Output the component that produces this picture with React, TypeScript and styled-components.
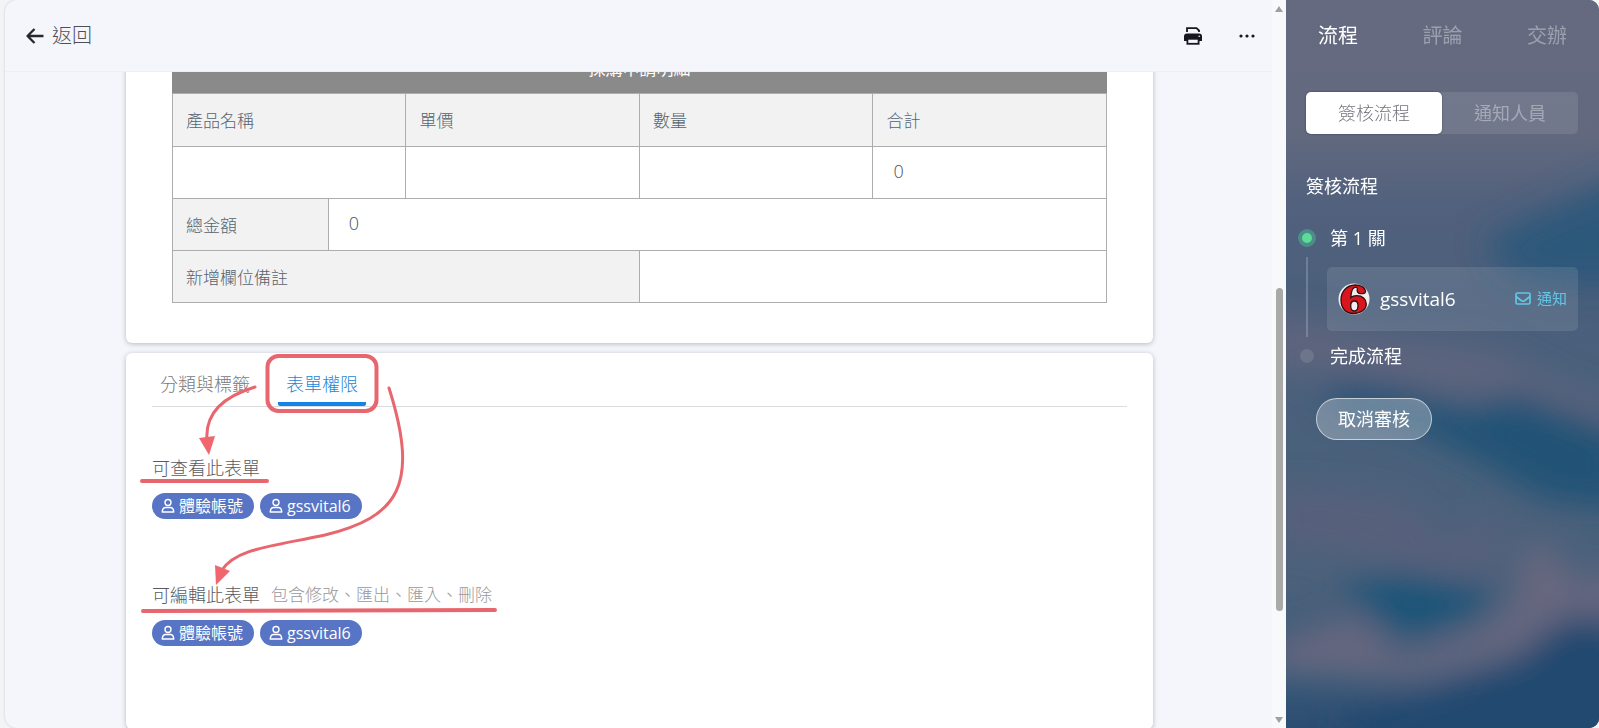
import React, { useLayoutEffect, useRef } from "react";
import styled, { createGlobalStyle, css } from "styled-components";

const GlobalStyle = createGlobalStyle`
  * { box-sizing: border-box; }
  body {
    margin: 0;
    background: #f1f2f3;
    color: #666b73;
    font-family: "Open Sans", "Noto Sans CJK TC", sans-serif;
    font-weight: 300;
    font-size: 18px;
    line-height: 24px;
  }
  button {
    margin: 0;
    padding: 0;
    border: 0;
    background: none;
    color: inherit;
    font: inherit;
    cursor: pointer;
  }
`;

const Shell = styled.div`
  display: grid;
  grid-template-columns: minmax(0, 1fr) 313px;
  height: 100vh;
  padding-left: 5px;
  background: #f3f4f6;
`;

const Main = styled.main`
  display: grid;
  grid-template-columns: minmax(0, 1fr) 14px;
  min-height: 0;
  background: #f5f6fb;
  border-radius: 12px 0 0 12px;
  box-shadow: 0 0 3px rgba(0, 0, 0, 0.16);
  overflow: hidden;
`;

const Document = styled.div`
  display: flex;
  flex-direction: column;
  min-width: 0;
  min-height: 0;
`;

const Header = styled.header`
  display: flex;
  align-items: center;
  justify-content: space-between;
  flex: none;
  height: 72px;
  padding: 0 8px 0 20px;
  border-bottom: 1px solid #eeeff4;
`;

const BackButton = styled.button`
  display: flex;
  align-items: center;
  gap: 7px;
  color: #4d5056;
  font-size: 20px;
`;

const HeaderActions = styled.div`
  display: flex;
  gap: 20px;
`;

const IconButton = styled.button`
  display: grid;
  place-items: center;
  width: 34px;
  height: 34px;
  color: #17181f;
`;

const ScrollPane = styled.div`
  flex: 1;
  min-height: 0;
  overflow-y: auto;
  scrollbar-width: none;
`;

const Page = styled.div`
  display: flex;
  flex-direction: column;
  gap: 10px;
  padding: 20px 119px 200px 121px;
`;

const Card = styled.section`
  background: #fff;
  border-radius: 6px;
  box-shadow: 0 1px 5px rgba(40, 45, 60, 0.3);
`;

const FormCard = styled(Card)`
  padding: 46px 46px 40px;
`;

const AccessCard = styled(Card)`
  position: relative;
  min-height: 376px;
  padding: 9px 26px;
`;

const FormTable = styled.table`
  width: 100%;
  table-layout: fixed;
  border-collapse: collapse;
  color: #566270;
  font-size: 17px;

  caption {
    height: 52px;
    padding: 16px 0 12px;
    background: #8a8a8a;
    color: #fff;
    font-weight: 400;
  }
  th, td {
    height: 52px;
    padding: 2px 13px 0;
    border: 1px solid #adadad;
    text-align: left;
    font-weight: 300;
  }
  th { background: #f2f2f2; }
  th[scope="col"] { height: 53px; }
  td { padding: 0 20px 4px; color: #4c5158; font-size: 18px; }
`;

const TabBar = styled.div`
  display: flex;
  gap: 20px;
  border-bottom: 1px solid #dcdde0;
`;

const Tab = styled.button<{ $active?: boolean }>`
  height: 44px;
  padding: 4px 8px 0;
  border-bottom: 4px solid ${(p) => (p.$active ? "#1583e4" : "transparent")};
  border-radius: 2px;
  color: ${(p) => (p.$active ? "#1f86d6" : "#77797d")};
`;

const AccessGroup = styled.div`
  display: flex;
  flex-direction: column;
  gap: 13px;
  padding-top: 49px;
  & + & { padding-top: 64px; }
`;

const AccessTitle = styled.h3`
  display: flex;
  gap: 11px;
  margin: 0;
  color: #595b60;
  font-size: 18px;
  font-weight: 300;
  small { color: #97999d; font-size: 17px; }
`;

const Chips = styled.div`
  display: flex;
  gap: 6px;
`;

const Chip = styled.span`
  display: flex;
  align-items: center;
  gap: 4px;
  height: 26px;
  padding: 0 11px 0 9px;
  border-radius: 13px;
  background: #5874c4;
  color: #fff;
  font-size: 16px;
  font-weight: 400;
`;

const Annotation = styled.svg`
  position: absolute;
  left: 14px;
  top: 1px;
  width: 380px;
  height: 270px;
  pointer-events: none;
`;

const ScrollRail = styled.div`
  display: grid;
  grid-template-rows: 17px minmax(0, 271fr) minmax(0, 323fr) minmax(0, 100fr) 17px;
  justify-items: center;
  align-items: center;
  background: #f8f9fb;
`;

const Thumb = styled.div`
  grid-row: 3;
  width: 7px;
  height: 100%;
  border-radius: 4px;
  background: #a9a9a9;
`;

const Arrow = styled.i<{ $down?: boolean }>`
  grid-row: ${(p) => (p.$down ? 5 : 1)};
  border: 4px solid transparent;
  ${(p) =>
    p.$down
      ? css`border-top: 6px solid #a0a0a0; border-bottom: 0;`
      : css`border-bottom: 6px solid #a0a0a0; border-top: 0;`}
`;

const Sidebar = styled.aside`
  position: relative;
  isolation: isolate;
  border-radius: 0 10px 10px 0;
  overflow: hidden;
  background: #4d617c;
  color: #fff;
  font-weight: 400;
`;

const Backdrop = styled.svg`
  position: absolute;
  inset: 0;
  z-index: -1;
  width: 100%;
  height: 100%;
`;

const SideTabs = styled.nav`
  display: flex;
  justify-content: space-between;
  align-items: center;
  height: 72px;
  padding: 0 32px;
`;

const SideTab = styled.button<{ $active?: boolean }>`
  color: ${(p) => (p.$active ? "#fff" : "rgba(255, 255, 255, 0.36)")};
  font-size: 20px;
`;

const SideBody = styled.div`
  padding: 20px 21px 0 20px;
`;

const Segmented = styled.div`
  display: flex;
  height: 42px;
  border-radius: 5px;
  background: rgba(255, 255, 255, 0.1);
`;

const Segment = styled.button<{ $active?: boolean }>`
  flex: 1;
  border-radius: 5px;
  ${(p) =>
    p.$active
      ? css`background: #fff; color: #73767c; font-weight: 300; box-shadow: 0 0 2px rgba(0, 0, 0, 0.4);`
      : css`color: rgba(255, 255, 255, 0.36);`}
`;

const SideTitle = styled.h2`
  margin: 40px 0 28px;
  font-size: 18px;
  font-weight: 400;
`;

const Step = styled.div`
  display: grid;
  grid-template-columns: 2px minmax(0, 1fr);
  column-gap: 19px;
`;

const StepName = styled.span`
  padding-left: 3px;
`;

const Marker = styled.span<{ $done?: boolean }>`
  justify-self: center;
  align-self: center;
  width: ${(p) => (p.$done ? 18 : 14)}px;
  height: ${(p) => (p.$done ? 18 : 14)}px;
  border-radius: 50%;
  ${(p) =>
    p.$done
      ? css`background: #5cdb99; border: 4px solid #4c8d88;`
      : css`background: rgba(255, 255, 255, 0.11);`}
`;

const Rail = styled.span`
  height: 80px;
  margin-top: 7px;
  background: rgba(255, 255, 255, 0.2);
`;

const Approver = styled.div`
  display: flex;
  align-items: center;
  gap: 10px;
  height: 64px;
  margin: 17px 0 13px;
  padding: 0 11px;
  border-radius: 5px;
  background: rgba(255, 255, 255, 0.1);
  font-size: 19px;
`;

const NotifyButton = styled.button`
  display: flex;
  align-items: center;
  gap: 6px;
  margin-left: auto;
  padding-bottom: 2px;
  color: #62c6e8;
  font-size: 15px;
`;

const CancelButton = styled.button`
  height: 42px;
  margin: 30px 10px;
  padding: 0 21px;
  border: 1px solid rgba(255, 255, 255, 0.6);
  border-radius: 21px;
  background: rgba(255, 255, 255, 0.27);
`;

const PersonIcon = () => (
  <svg width="14" height="16" viewBox="0 0 14 16" fill="none" stroke="#fff" strokeWidth="1.4" aria-hidden="true">
    <circle cx="7" cy="4.500" r="3" />
    <path d="M4.500 9.500h5c1.700 0 3 1.500 3.300 4.500H1.200C1.500 11 2.800 9.500 4.500 9.500Z" strokeLinejoin="round" />
  </svg>
);

const people = ["體驗帳號", "gssvital6"];

const PeopleChips = () => (
  <Chips>
    {people.map((name) => (
      <Chip key={name}>
        <PersonIcon />
        {name}
      </Chip>
    ))}
  </Chips>
);

const SidebarBackdrop = () => (
  <Backdrop viewBox="0 0 313 728" preserveAspectRatio="none" aria-hidden="true">
    <defs>
      <linearGradient id="base" x1="0" y1="0" x2="0" y2="1">
        <stop offset="0" stopColor="#666a80" />
        <stop offset="0.18" stopColor="#62697f" />
        <stop offset="0.28" stopColor="#52617d" />
        <stop offset="0.4" stopColor="#4b5f7b" />
        <stop offset="0.6" stopColor="#4a617c" />
        <stop offset="0.8" stopColor="#4c617b" />
        <stop offset="0.92" stopColor="#3b5b7a" />
        <stop offset="1" stopColor="#2c4d72" />
      </linearGradient>
      <filter id="haze" x="-50%" y="-50%" width="200%" height="200%">
        <feGaussianBlur stdDeviation="16" />
      </filter>
    </defs>
    <rect width="313" height="728" fill="url(#base)" />
    <g filter="url(#haze)">
      <path d="M350 170 L300 195 L240 220 L200 240 L220 272 L270 285 L350 285Z" fill="#2a567a" opacity="0.9" />
      <path d="M-20 310 L90 335 L200 348 L290 390 L340 410 L340 430 L250 400 L150 390 L-20 370Z" fill="#67667f" opacity="0.7" />
      <path d="M35 380 L100 384 L180 412 L230 392 L340 435 L340 510 L260 500 L190 460 L120 425 L50 410Z" fill="#205276" />
      <path d="M-10 485 L60 490 L120 500 L160 540 L200 515 L225 540 L190 580 L130 570 L70 555 L-10 545Z" fill="#635f7b" opacity="0.5" />
      <path d="M50 585 L120 575 L210 590 L190 618 L120 640 L85 615Z" fill="#1c5478" />
      <path d="M-20 650 L20 630 L75 615 L115 655 L190 630 L230 600 L238 545 L262 545 L290 585 L340 570 L340 620 L280 615 L230 655 L130 680 L-20 670Z" fill="#6c687f" opacity="0.9" />
      <path d="M340 622 L280 618 L230 660 L140 695 L60 715 L60 760 L340 760Z" fill="#22486f" />
    </g>
  </Backdrop>
);

export default function App() {
  const pane = useRef<HTMLDivElement>(null);

  // Open the document scrolled to the purchase detail table.
  useLayoutEffect(() => {
    if (pane.current) pane.current.scrollTop = 97;
  }, []);

  return (
    <>
      <GlobalStyle />
      <Shell>
        <Main>
          <Document>
            <Header>
              <BackButton type="button">
                <svg width="20" height="20" viewBox="0 0 20 20" fill="none" stroke="#26282e" strokeWidth="2.300" aria-hidden="true">
                  <path d="M18.500 10H3M9.500 3L2.500 10l7 7" strokeLinejoin="round" />
                </svg>
                返回
              </BackButton>
              <HeaderActions>
                <IconButton type="button" aria-label="列印">
                  <svg width="20" height="20" viewBox="0 0 20 20" fill="none" aria-hidden="true">
                    <path d="M4 6V2.200h9.500L16 4.500V6" stroke="currentColor" strokeWidth="1.800" />
                    <path d="M4 7.500h12a3 3 0 0 1 3 3v4.500h-3.500v-2.500h-11V15H1v-4.500a3 3 0 0 1 3-3Z" fill="currentColor" />
                    <rect x="4.400" y="12.800" width="11.200" height="5" fill="#f5f6fb" stroke="currentColor" strokeWidth="1.800" />
                    <circle cx="16.200" cy="10.200" r="0.800" fill="#f5f6fb" />
                  </svg>
                </IconButton>
                <IconButton type="button" aria-label="更多">
                  <svg width="16" height="4" viewBox="0 0 16 4" fill="currentColor" aria-hidden="true">
                    <circle cx="2" cy="2" r="1.600" />
                    <circle cx="8" cy="2" r="1.600" />
                    <circle cx="14" cy="2" r="1.600" />
                  </svg>
                </IconButton>
              </HeaderActions>
            </Header>
            <ScrollPane ref={pane}>
              <Page>
                <FormCard>
                  <FormTable>
                    <caption>採購申請明細</caption>
                    <colgroup>
                      {Array.from({ length: 12 }, (_, i) => (
                        <col key={i} />
                      ))}
                    </colgroup>
                    <tbody>
                      <tr>
                        <th scope="col" colSpan={3}>產品名稱</th>
                        <th scope="col" colSpan={3}>單價</th>
                        <th scope="col" colSpan={3}>數量</th>
                        <th scope="col" colSpan={3}>合計</th>
                      </tr>
                      <tr>
                        <td colSpan={3} />
                        <td colSpan={3} />
                        <td colSpan={3} />
                        <td colSpan={3}>0</td>
                      </tr>
                      <tr>
                        <th scope="row" colSpan={2}>總金額</th>
                        <td colSpan={10}>0</td>
                      </tr>
                      <tr>
                        <th scope="row" colSpan={6}>新增欄位備註</th>
                        <td colSpan={6} />
                      </tr>
                    </tbody>
                  </FormTable>
                </FormCard>
                <AccessCard>
                  <TabBar role="tablist">
                    <Tab type="button" role="tab" aria-selected="false">分類與標籤</Tab>
                    <Tab type="button" role="tab" aria-selected="true" $active>表單權限</Tab>
                  </TabBar>
                  <AccessGroup>
                    <AccessTitle>可查看此表單</AccessTitle>
                    <PeopleChips />
                  </AccessGroup>
                  <AccessGroup>
                    <AccessTitle>
                      可編輯此表單 <small>包含修改、匯出、匯入、刪除</small>
                    </AccessTitle>
                    <PeopleChips />
                  </AccessGroup>
                  <Annotation viewBox="0 0 380 270" fill="none" stroke="#e8666d" strokeLinecap="round" aria-hidden="true">
                    <rect x="127.500" y="2" width="109" height="55" rx="11" strokeWidth="4" />
                    <path d="M115 33C82 43 65 61 67 86" strokeWidth="3" />
                    <path d="M59 84L75 82L69 101Z" fill="#f0666c" stroke="none" />
                    <path d="M249 34C280 132 258 163 185 181C128 193 96 195 82 216" strokeWidth="3" />
                    <path d="M75 211L90 217L76 231Z" fill="#f0666c" stroke="none" />
                    <path d="M2 127H127M3 257L355 256" strokeWidth="4" />
                  </Annotation>
                </AccessCard>
              </Page>
            </ScrollPane>
          </Document>
          <ScrollRail aria-hidden="true">
            <Arrow />
            <Thumb />
            <Arrow $down />
          </ScrollRail>
        </Main>
        <Sidebar>
          <SidebarBackdrop />
          <SideTabs>
            <SideTab type="button" $active>流程</SideTab>
            <SideTab type="button">評論</SideTab>
            <SideTab type="button">交辦</SideTab>
          </SideTabs>
          <SideBody>
            <Segmented>
              <Segment type="button" $active>簽核流程</Segment>
              <Segment type="button">通知人員</Segment>
            </Segmented>
            <SideTitle>簽核流程</SideTitle>
            <Step>
              <Marker $done />
              <StepName>第 1 關</StepName>
              <Rail />
              <Approver>
                <svg width="32" height="32" viewBox="0 0 32 32" aria-hidden="true">
                  <circle cx="16" cy="16" r="15.500" fill="#f1eeee" />
                  <path
                    fillRule="evenodd"
                    d="M27.500 8.500C27 4 22 1.800 17 2C8.500 2.300 3 8.500 3 17c0 8 4.500 13.500 12.500 13.500c7.500 0 12.800-4 12.800-9.500c0-5-4-8.300-9.500-8.300c-2.600 0-4.600.6-6 1.800c.3-6 1.800-10 4.800-10.300c1.400 0 1.900.6 1.700 1.500c-.6 3 .7 5 3.700 5c2.700 0 4.500-1.200 4.500-2.200ZM16.500 18c2.500 0 3.500 1.500 3.500 4.500s-1 5.500-3.700 5.500s-3.600-2.500-3.600-5.500s1.200-4.500 3.800-4.500Z"
                    fill="#d9151d"
                    stroke="#2b1013"
                    strokeWidth="1.300"
                  />
                </svg>
                gssvital6
                <NotifyButton type="button">
                  <svg width="16" height="13" viewBox="0 0 16 13" fill="none" stroke="currentColor" strokeWidth="1.700" aria-hidden="true">
                    <rect x="1" y="1" width="14" height="11" rx="1.500" />
                    <path d="M1 4.500l5.500 4.200q1.500 1 3 0L15 4.500" />
                  </svg>
                  通知
                </NotifyButton>
              </Approver>
              <Marker />
              <StepName>完成流程</StepName>
            </Step>
            <CancelButton type="button">取消審核</CancelButton>
          </SideBody>
        </Sidebar>
      </Shell>
    </>
  );
}
